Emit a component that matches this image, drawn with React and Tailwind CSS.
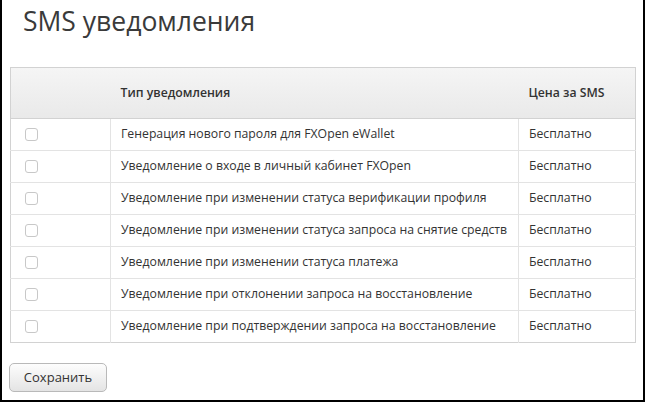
const rows = [
  'Генерация нового пароля для FXOpen eWallet',
  'Уведомление о входе в личный кабинет FXOpen',
  'Уведомление при изменении статуса верификации профиля',
  'Уведомление при изменении статуса запроса на снятие средств',
  'Уведомление при изменении статуса платежа',
  'Уведомление при отклонении запроса на восстановление',
  'Уведомление при подтверждении запроса на восстановление',
]

export default function App() {
  return (
    <div className="w-[645px] h-[402px] bg-white border-x-2 border-b-2 border-black font-['Open_Sans',sans-serif] text-[#333] overflow-hidden">
      <h1 className="pl-[21px] pt-[3px] text-[26.5px] leading-[36px] text-[#3a3a3a]">SMS уведомления</h1>

      <table className="mt-[28px] ml-[8px] w-[626px] table-fixed border-collapse border border-[#d2d2d2] text-[12.25px] whitespace-nowrap">
        <thead>
          <tr className="h-[51px] bg-gradient-to-b from-[#f5f5f5] to-[#e9e9e9]">
            <th className="w-[100px] border-b border-[#d2d2d2]"></th>
            <th className="w-[408px] border-b border-[#d2d2d2] pl-[10px] text-left font-semibold">Тип уведомления</th>
            <th className="border-b border-[#d2d2d2] pl-[10px] text-left font-semibold">Цена за SMS</th>
          </tr>
        </thead>
        <tbody>
          {rows.map((r, i) => (
            <tr key={i} className="h-[32px] border-t border-[#e3e3e3] first:border-t-0">
              <td className="border-r border-[#e3e3e3] pl-[14px]">
                <div className="w-[13px] h-[13px] rounded-[3px] border border-[#c8c8c8] bg-white" />
              </td>
              <td className="border-r border-[#e3e3e3] pl-[10px]">{r}</td>
              <td className="pl-[10px]">Бесплатно</td>
            </tr>
          ))}
        </tbody>
      </table>

      <button className="mt-[20px] ml-[7px] w-[98px] h-[29px] rounded-[5px] border border-[#b9b9b9] bg-gradient-to-b from-[#fdfdfd] to-[#e4e4e4] text-[13px] text-[#333]">
        Сохранить
      </button>
    </div>
  )
}
